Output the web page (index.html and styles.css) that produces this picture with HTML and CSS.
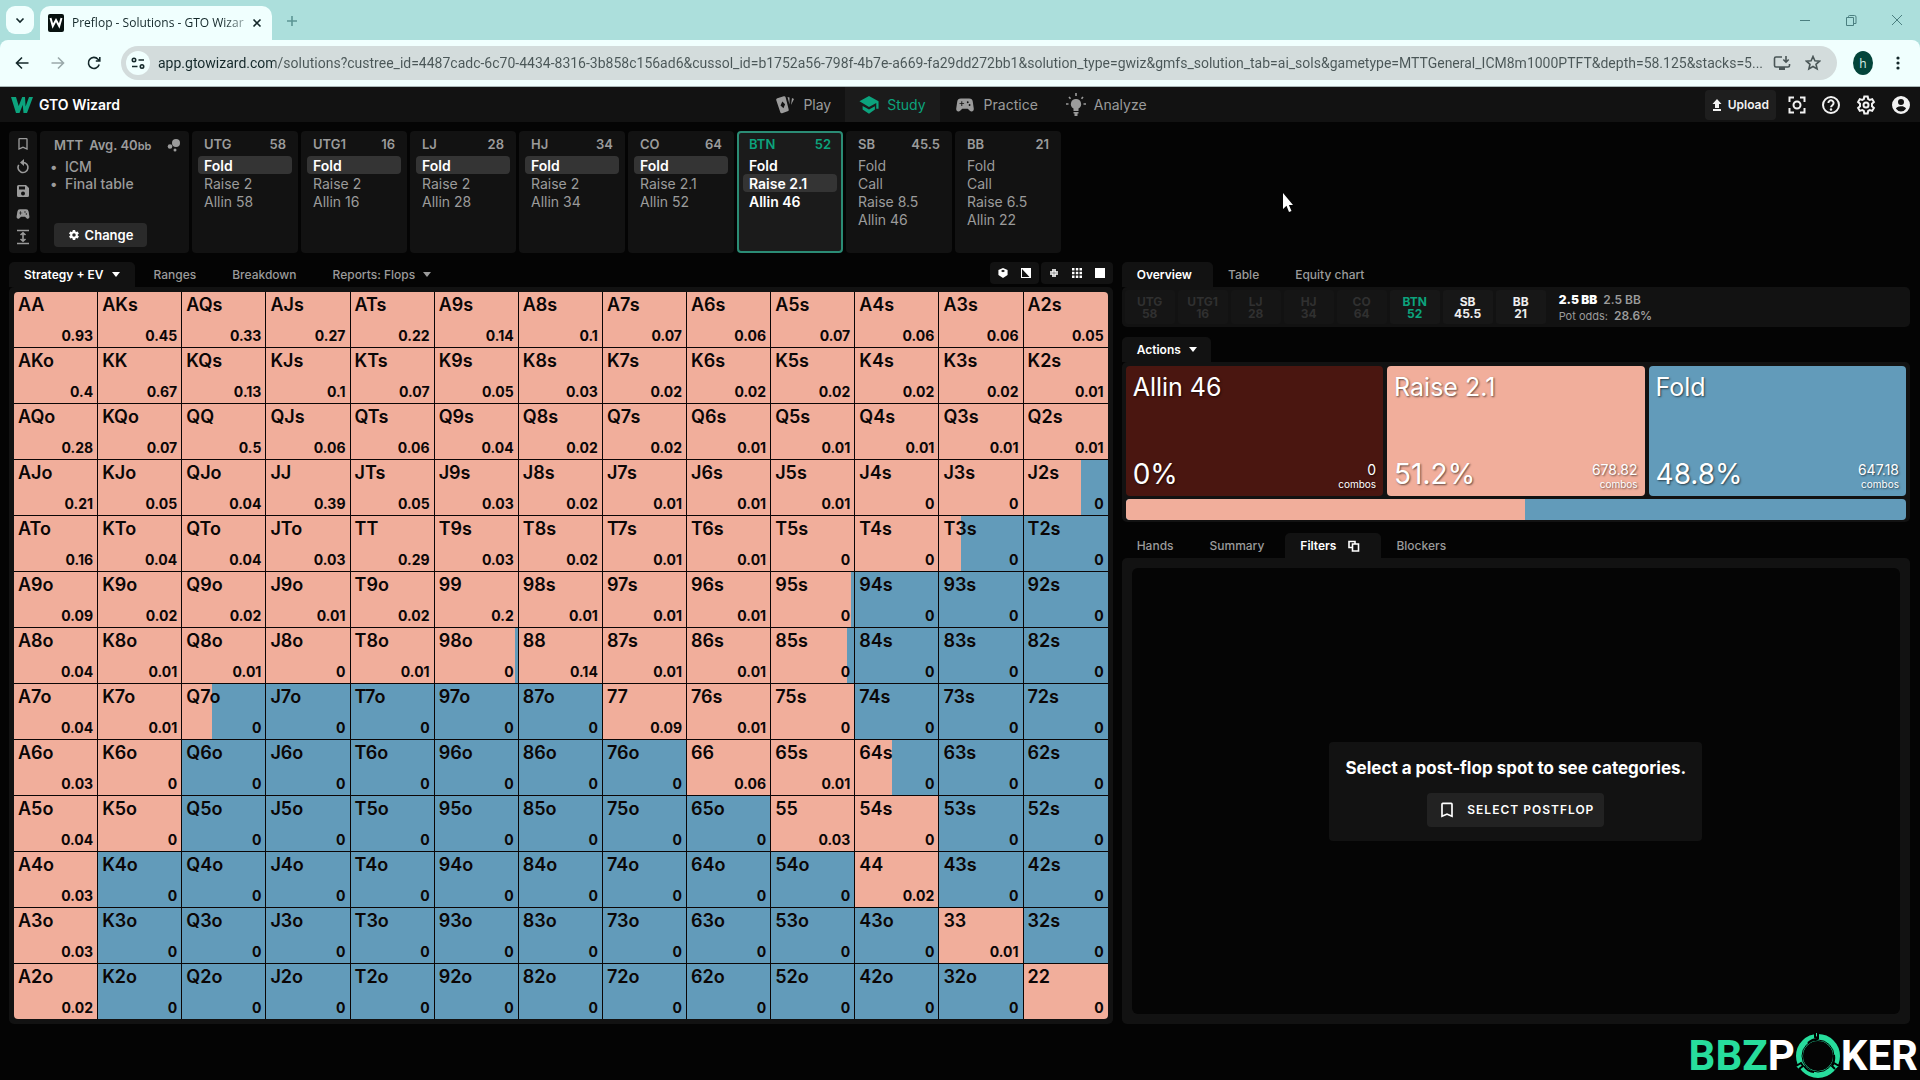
FILE: index.html
```html
<!DOCTYPE html>
<html lang="en">
<head>
    <meta charset="UTF-8">
    <meta name="viewport" content="width=device-width, initial-scale=1.0">
    <title>Preflop - Solutions - GTO Wizard</title>
    <link rel="stylesheet" href="styles.css">
</head>
<body>
    <!-- icons used more than once -->
    <svg class="sprite" width="0" height="0" aria-hidden="true">
        <symbol id="bookmark" viewBox="0 0 24 24"><path d="M17 3H7a2 2 0 0 0-2 2v16l7-3 7 3V5a2 2 0 0 0-2-2zm0 15l-5-2.2L7 18V5h10z"/></symbol>
        <symbol id="gamepad" viewBox="0 0 24 24"><path fill-rule="evenodd" d="M21.6 16.1l-1.1-7.6A4 4 0 0 0 16.500 5h-9a4 4 0 0 0-4 3.500L2.400 16.100A2.500 2.500 0 0 0 6.700 18.200L9 16h6l2.300 2.200a2.500 2.500 0 0 0 4.300-2.100zM11 11H9v2H8v-2H6v-1h2V8h1v2h2zm4-1a1 1 0 1 1 0-2 1 1 0 0 1 0 2zm2 3a1 1 0 1 1 0-2 1 1 0 0 1 0 2z"/></symbol>
        <symbol id="gear" viewBox="0 0 24 24"><path fill-rule="evenodd" d="M19.400 13a7.500 7.500 0 0 0 0-2l2.100-1.600a.5.5 0 0 0 .1-.6l-2-3.500a.5.5 0 0 0-.6-.2l-2.500 1a7.300 7.300 0 0 0-1.700-1l-.4-2.600a.5.5 0 0 0-.5-.4h-4a.5.5 0 0 0-.5.4L9 5.100a7.700 7.700 0 0 0-1.700 1l-2.500-1a.5.5 0 0 0-.6.2l-2 3.500a.5.5 0 0 0 .1.600L4.500 11a8 8 0 0 0 0 2l-2.100 1.600a.5.5 0 0 0-.1.600l2 3.500c.1.200.4.300.6.200l2.500-1c.5.400 1.100.700 1.700 1l.4 2.600c0 .2.200.4.500.4h4c.200 0 .500-.2.500-.4l.4-2.600a7.300 7.300 0 0 0 1.700-1l2.500 1c.200.100.500 0 .600-.2l2-3.500a.5.5 0 0 0-.1-.6zM12 15.500a3.500 3.500 0 1 1 0-7 3.500 3.500 0 0 1 0 7z"/></symbol>
    </svg>

    <header class="browser">
        <div class="tabstrip">
            <button class="tab-search" aria-label="Search tabs"><svg width="12" height="12" viewBox="0 0 12 12"><path class="line" d="M2.500 4.500L6 8l3.500-3.500"/></svg></button>
            <div class="page-tab">
                <svg width="16" height="18" viewBox="0 0 16 18"><rect width="16" height="18" rx="2" fill="#07110f"/><path d="M2.500 4l2.300 8L8 6l3.200 6L13.500 4" fill="none" stroke="#fff" stroke-width="2"/></svg>
                <span class="page-title">Preflop - Solutions - GTO Wizar</span>
                <button class="close-tab" aria-label="Close tab"><svg width="10" height="10" viewBox="0 0 10 10"><path class="line" d="M1.500 1.500l7 7m0-7l-7 7"/></svg></button>
            </div>
            <button class="new-tab" aria-label="New tab"><svg width="12" height="12" viewBox="0 0 12 12"><path class="line" d="M6 1v10M1 6h10"/></svg></button>
            <div class="window-buttons">
                <button aria-label="Minimize"><svg width="12" height="12" viewBox="0 0 12 12"><path class="thin" d="M1 6.500h10"/></svg></button>
                <button aria-label="Restore"><svg width="12" height="12" viewBox="0 0 12 12"><path class="thin" d="M1.500 3.500h7v8h-7zM3.500 3.500v-1a1 1 0 0 1 1-1h5a1.500 1.500 0 0 1 1.500 1.500v6.500h-2"/></svg></button>
                <button aria-label="Close"><svg width="12" height="12" viewBox="0 0 12 12"><path class="thin" d="M1 1l10 10M11 1L1 11"/></svg></button>
            </div>
        </div>
        <div class="toolbar">
            <button aria-label="Back"><svg width="14" height="14" viewBox="0 0 14 14"><path class="line" d="M13.500 7H1.500M7 1.500L1.500 7 7 12.500"/></svg></button>
            <button class="dim" aria-label="Forward"><svg width="14" height="14" viewBox="0 0 14 14"><path class="line" d="M.5 7h12M7 1.500L12.500 7 7 12.500"/></svg></button>
            <button aria-label="Reload"><svg width="14" height="14" viewBox="0 0 14 14"><path class="line" d="M12.200 8.500A5.500 5.500 0 1 1 11 3.200l1.500 1.500M12.800 1v4h-4"/></svg></button>
            <div class="address">
                <button class="site-info" aria-label="Site information"><svg width="14" height="14" viewBox="0 0 14 14"><path class="line" d="M7.500 4H13M1 10.500h5.500"/><circle class="line" cx="3" cy="4" r="1.700"/><circle class="line" cx="11" cy="10.500" r="1.700"/></svg></button>
                <input class="url" type="text" aria-label="Address" value="app.gtowizard.com/solutions?custree_id=4487cadc-6c70-4434-8316-3b858c156ad6&amp;cussol_id=b1752a56-798f-4b7e-a669-fa29dd272bb1&amp;solution_type=gwiz&amp;gmfs_solution_tab=ai_sols&amp;gametype=MTTGeneral_ICM8m1000PTFT&amp;depth=58.125&amp;stacks=5...">
                <button aria-label="Install app"><svg width="18" height="16" viewBox="0 0 18 16"><path class="line" d="M9 2H3a1.500 1.500 0 0 0-1.500 1.500v7A1.500 1.500 0 0 0 3 12h12a1.500 1.500 0 0 0 1.500-1.500V9M13 1v6M10.300 4.500L13 7.200l2.700-2.700"/><path d="M6 12h6v3H6z"/></svg></button>
                <button aria-label="Bookmark page"><svg width="16" height="16" viewBox="0 0 16 16"><path class="line" d="M8 1.500l1.900 4.300 4.600.4-3.500 3.100 1.100 4.600L8 11.500l-4.100 2.400L5 9.300 1.500 6.200l4.600-.4z"/></svg></button>
            </div>
            <button class="profile" aria-label="Profile">h</button>
            <button aria-label="Browser menu"><svg width="6" height="16" viewBox="0 0 6 16"><circle cx="3" cy="3" r="1.600"/><circle cx="3" cy="8" r="1.600"/><circle cx="3" cy="13" r="1.600"/></svg></button>
        </div>
    </header>

    <div class="app-header">
        <a class="brand" href="#">
            <svg width="22" height="18" viewBox="0 0 22 18"><path d="M0 1h5l2.700 9L11.200 1H14l.6 9.500L18 1h4l-6 16h-3.500l-.8-8-3.200 8H5z" fill="#0ca37d"/></svg>
            GTO Wizard
        </a>
        <nav class="main-nav">
            <a href="#"><svg width="20" height="20" viewBox="0 0 20 20"><path fill-rule="evenodd" d="M2.300 3.200l6.500-2a1.500 1.500 0 0 1 1.800 1.100l3.100 12.200a1.500 1.500 0 0 1-1.100 1.800l-5.500 2a1.500 1.500 0 0 1-1.800-1.100L1.200 5a1.500 1.500 0 0 1 1.100-1.800zM7.300 6.500L5.500 10.500l3 2.800 1.600-4z"/><path d="M12.500 2l2 .5v7zM17 3l2 1-3 6z"/></svg>Play</a>
            <a class="current" href="#"><svg width="20" height="20" viewBox="0 0 22 20"><path d="M11 0l10.500 6v8H19V7.800L11 12.200.5 6zM4 11l7 4 6.500-3.700V15L11 19.500 4 15z"/></svg>Study</a>
            <a href="#"><svg width="22" height="22"><use href="#gamepad"/></svg>Practice</a>
            <a href="#"><svg width="20" height="24" viewBox="0 0 20 24"><path d="M10 6a5 5 0 0 0-2.500 9.400V18h5v-2.600A5 5 0 0 0 10 6zM7.500 19h5v1.500h-1V23h-3v-2.500h-1z"/><path class="line" d="M10 0V3M0 11h2.500M17.500 11H20M3 4l1.500 1.800M17 4l-1.500 1.800"/></svg>Analyze</a>
        </nav>
        <div class="header-tools">
            <button class="upload"><svg width="10" height="12" viewBox="0 0 10 12"><path d="M5 0l4.500 5H7v4H3V5H.5zM1 10h8v2H1z"/></svg>Upload</button>
            <button aria-label="Screenshot"><svg width="18" height="18" viewBox="0 0 18 18"><path class="bold" d="M1.500 6V1.500H6M12 1.500h4.500V6M16.500 12v4.500H12M6 16.500H1.500V12"/><circle class="bold" cx="9" cy="9" r="3.500"/></svg></button>
            <button aria-label="Help"><svg width="20" height="20" viewBox="0 0 20 20"><circle class="bold" cx="10" cy="10" r="8"/><path class="bold" d="M7.400 8a2.600 2.600 0 1 1 4.200 2c-1 .8-1.600 1.200-1.600 2.200"/><circle cx="10" cy="14.500" r="1.200"/></svg></button>
            <button aria-label="Settings"><svg width="20" height="20" viewBox="0 0 20 20"><path class="bold" d="M8.300 1.500h3.400l.5 2.500 1.600.9 2.400-.8 1.700 2.900-1.900 1.700v2.600l1.900 1.700-1.700 2.900-2.400-.8-1.600.9-.5 2.500H8.300L7.800 16l-1.600-.9-2.400.8L2.100 13 4 11.300V8.700L2.100 7l1.700-2.900 2.400.8L7.800 4z"/><circle class="bold" cx="10" cy="10" r="2.500"/></svg></button>
            <button aria-label="Account"><svg width="20" height="20" viewBox="0 0 20 20"><path fill-rule="evenodd" d="M10 1a9 9 0 1 0 0 18 9 9 0 0 0 0-18zm0 3a3 3 0 1 1 0 6 3 3 0 0 1 0-6zm0 12.500a6 6 0 0 1-5-2.700c0-1.700 3.300-2.600 5-2.600s5 .9 5 2.600a6 6 0 0 1-5 2.700z"/></svg></button>
        </div>
    </div>

    <main>
        <section class="spots" aria-label="Action history">
            <div class="rail">
                <button aria-label="Bookmark"><svg width="16" height="16"><use href="#bookmark"/></svg></button>
                <button aria-label="Reset"><svg width="16" height="16" viewBox="0 0 16 16"><path class="line" d="M8 3.500a5 5 0 1 1-4.300 2.400"/><path d="M9 0v7L5 3.500z"/></svg></button>
                <button aria-label="Save"><svg width="16" height="16" viewBox="0 0 16 16"><path fill-rule="evenodd" d="M3.500 2H11l3 3v7.500a1.500 1.500 0 0 1-1.500 1.500h-9A1.500 1.500 0 0 1 2 12.500v-9A1.500 1.500 0 0 1 3.500 2zM4 3.500v3h6v-3zM8 8.500a2 2 0 1 0 0 4 2 2 0 0 0 0-4z"/></svg></button>
                <button aria-label="Practice this spot"><svg width="16" height="16"><use href="#gamepad"/></svg></button>
                <button aria-label="Collapse"><svg width="16" height="16" viewBox="0 0 16 16"><path class="line" d="M2 1.500h12M2 14.500h12M8 4.500v7M5.500 6L8 3.800 10.500 6M5.500 10L8 12.200l2.500-2.200"/></svg></button>
            </div>
            <div class="format">
                <div class="format-head"><span>MTT</span><span>Avg. 40<small>bb</small></span><svg width="14" height="14" viewBox="0 0 14 14"><circle cx="9" cy="5" r="4"/><circle cx="3" cy="8.500" r="2.300"/><circle cx="8" cy="12" r="1.500"/></svg></div>
                <ul>
                    <li>ICM</li>
                    <li>Final table</li>
                </ul>
                <button class="change"><svg width="12" height="12"><use href="#gear"/></svg>Change</button>
            </div>
            <div class="spot"><h2>UTG<span>58</span></h2><button class="taken">Fold</button><button>Raise 2</button><button>Allin 58</button></div>
            <div class="spot"><h2>UTG1<span>16</span></h2><button class="taken">Fold</button><button>Raise 2</button><button>Allin 16</button></div>
            <div class="spot"><h2>LJ<span>28</span></h2><button class="taken">Fold</button><button>Raise 2</button><button>Allin 28</button></div>
            <div class="spot"><h2>HJ<span>34</span></h2><button class="taken">Fold</button><button>Raise 2</button><button>Allin 34</button></div>
            <div class="spot"><h2>CO<span>64</span></h2><button class="taken">Fold</button><button>Raise 2.1</button><button>Allin 52</button></div>
            <div class="spot active"><h2>BTN<span>52</span></h2><button>Fold</button><button class="taken">Raise 2.1</button><button>Allin 46</button></div>
            <div class="spot"><h2>SB<span>45.5</span></h2><button>Fold</button><button>Call</button><button>Raise 8.5</button><button>Allin 46</button></div>
            <div class="spot"><h2>BB<span>21</span></h2><button>Fold</button><button>Call</button><button>Raise 6.5</button><button>Allin 22</button></div>
        </section>

        <div class="columns">
            <section class="strategy">
                <div class="tabs">
                    <button class="selected">Strategy + EV<i class="caret"></i></button>
                    <button>Ranges</button>
                    <button>Breakdown</button>
                    <button>Reports: Flops<i class="caret"></i></button>
                    <div class="view-tools">
                        <div class="tool-group">
                            <button aria-label="Suits"><svg width="10" height="10" viewBox="0 0 12 12"><path fill-rule="evenodd" d="M6 0l5.500 2.500v6L6 12 .5 8.500v-6zM6 2L3.500 3.500 6 5l2.500-1.500z"/></svg></button>
                            <button aria-label="Contrast"><svg width="10" height="10" viewBox="0 0 10 10"><path fill-rule="evenodd" d="M0 0h10v10H0zM1 1v8h7.500z"/></svg></button>
                        </div>
                        <div class="tool-group">
                            <button aria-label="Compact"><svg width="10" height="10" viewBox="0 0 10 10"><path class="line" d="M4 1v3H1M6 1v3h3M4 9V6H1M6 9V6h3"/></svg></button>
                            <button aria-label="Grid"><svg width="10" height="10" viewBox="0 0 10 10"><path d="M0 0h2.500v2.500H0zM3.800 0h2.500v2.500H3.800zM7.500 0H10v2.500H7.500zM0 3.800h2.500v2.500H0zM3.800 3.800h2.500v2.500H3.800zM7.500 3.800H10v2.500H7.500zM0 7.500h2.500V10H0zM3.800 7.500h2.500V10H3.800zM7.500 7.500H10V10H7.500z"/></svg></button>
                            <button aria-label="Full"><svg width="10" height="10" viewBox="0 0 10 10"><path d="M0 0h10v10H0z"/></svg></button>
                        </div>
                    </div>
                </div>
                <div class="panel matrix-panel">
                    <table class="matrix" aria-label="Strategy and EV by hand"><tbody id="matrix"></tbody></table>
                </div>
            </section>

            <section class="details">
                <div class="tabs">
                    <button class="selected">Overview</button>
                    <button>Table</button>
                    <button>Equity chart</button>
                </div>
                <div class="panel stacks">
                    <div class="seat folded">UTG<br>58</div>
                    <div class="seat folded">UTG1<br>16</div>
                    <div class="seat folded">LJ<br>28</div>
                    <div class="seat folded">HJ<br>34</div>
                    <div class="seat folded">CO<br>64</div>
                    <div class="seat hero">BTN<br>52</div>
                    <div class="seat">SB<br>45.5</div>
                    <div class="seat">BB<br>21</div>
                    <div class="pot">
                        <div><b>2.5 BB</b>&nbsp; 2.5 BB</div>
                        <div><small>Pot odds:</small>&nbsp; 28.6%</div>
                    </div>
                </div>

                <div class="tabs actions-tabs">
                    <button class="selected">Actions<i class="caret"></i></button>
                </div>
                <div class="panel actions">
                    <div class="action-cards">
                        <button class="action allin"><span class="name">Allin 46</span><span class="share">0%</span><span class="combos">0<small>combos</small></span></button>
                        <button class="action raise"><span class="name">Raise 2.1</span><span class="share">51.2%</span><span class="combos">678.82<small>combos</small></span></button>
                        <button class="action fold"><span class="name">Fold</span><span class="share">48.8%</span><span class="combos">647.18<small>combos</small></span></button>
                    </div>
                    <div class="total"><div class="total-raise" style="width: 51.2%"></div></div>
                </div>

                <div class="tabs filter-tabs">
                    <button>Hands</button>
                    <button>Summary</button>
                    <button class="selected with-icon">Filters<svg width="12" height="12" viewBox="0 0 12 12"><path class="line" d="M4 7.500H1v-6h6V4M4.500 4h6v7h-6z"/></svg></button>
                    <button>Blockers</button>
                </div>
                <div class="panel filters">
                    <div class="filters-body">
                        <div class="notice">
                            <p>Select a post-flop spot to see categories.</p>
                            <button><svg width="20" height="20"><use href="#bookmark"/></svg>SELECT POSTFLOP</button>
                        </div>
                    </div>
                </div>
            </section>
        </div>
    </main>

    <footer>
        <div class="watermark">
            <span class="bbz">BBZ</span><span>P</span>
            <svg width="46" height="46" viewBox="0 0 46 46">
                <circle cx="23" cy="23" r="18.500" fill="none" stroke="#27dd9c" stroke-width="7"/>
                <circle cx="23" cy="23" r="16" fill="none" stroke="#000" stroke-width="1"/>
                <path d="M20 0v4l3 1v-5M40 36l-3-3 2-3 5 3M1 33l5-3 2 3-4 3" fill="#27dd9c" stroke="#000" stroke-width="2"/>
                <path d="M23 6q-6 0-10 4M37 32q3-4 2-10M9 33q4 6 10 6" fill="none" stroke="#000" stroke-width="2"/>
            </svg>
            <span>KER</span>
        </div>
    </footer>

    <svg class="cursor" width="12" height="20" viewBox="0 0 12 20"><path d="M1 0v16l3.500-3.300L7 19l2.500-1-2.600-6H11z" fill="#fff"/></svg>

    <script src="script.js"></script>
</body>
</html>
```
FILE: styles.css
```css
* {
    box-sizing: border-box;
}
body {
    margin: 0;
    min-height: 100vh;
    background-color: #040404;
    color: #9b9b9b;
    font-family: Inter, "Liberation Sans", sans-serif;
    font-size: 14px;
    overflow-x: hidden;
}
button {
    display: flex;
    align-items: center;
    padding: 0;
    border: 0;
    background: none;
    color: inherit;
    font: inherit;
    cursor: pointer;
}
a {
    color: inherit;
    text-decoration: none;
}
svg {
    display: block;
    flex: none;
    fill: currentColor;
}
.sprite {
    position: absolute;
}
.line, .thin, .bold {
    fill: none;
    stroke: currentColor;
    stroke-width: 1.6;
}
.thin {
    stroke-width: 1;
}
.bold {
    stroke-width: 2;
}

/* browser window */
.browser {
    font-family: "Open Sans", "Noto Sans", sans-serif;
    background-color: #acdfdc;
    color: #14282a;
}
.tabstrip {
    display: flex;
    height: 40px;
    padding: 6px 17px 0 6px;
}
.tab-search {
    justify-content: center;
    width: 28px;
    height: 28px;
    margin-right: 6px;
    border-radius: 9px;
    background-color: #f0fffe;
}
.page-tab {
    display: flex;
    align-items: center;
    width: 232px;
    height: 34px;
    padding: 0 11px 0 8px;
    gap: 8px;
    border-radius: 10px 10px 0 0;
    background-color: #f0fffe;
}
.page-title {
    flex: 1;
    font-size: 12px;
    line-height: 18px;
    white-space: nowrap;
    mask-image: linear-gradient(to right, #000 88%, rgba(0, 0, 0, 0.4));
}
.new-tab {
    height: 30px;
    margin-left: 14px;
    color: #5c9594;
}
.window-buttons {
    display: flex;
    gap: 34px;
    height: 28px;
    margin-left: auto;
    color: #4b7f80;
}
.toolbar {
    display: flex;
    align-items: center;
    gap: 22px;
    height: 47px;
    padding: 0 19px 0 15px;
    border-radius: 8px 8px 0 0;
    border-bottom: 1px solid #a9b8b8;
    background-color: #f0fffe;
}
.dim {
    color: #9aa9aa;
}
.address {
    display: flex;
    flex: 1;
    align-items: center;
    gap: 14px;
    height: 34px;
    margin: 0 -6px 0 -2px;
    padding: 0 16px 0 5px;
    border-radius: 17px;
    background-color: #d3dcdc;
    color: #4a5657;
}
.site-info {
    justify-content: center;
    width: 24px;
    height: 24px;
    margin-right: -6px;
    border-radius: 12px;
    background-color: #f0fffe;
    color: #14282a;
}
/* the host name is darker than the rest of the address */
.url {
    flex: 1;
    min-width: 0;
    height: 24px;
    margin-right: -12px;
    padding: 0;
    border: 0;
    background: linear-gradient(to right, #14282a 117px, #4a5657 117px);
    background-clip: text;
    color: transparent;
    font-family: Roboto, "Open Sans", sans-serif;
    font-size: 14px;
    text-overflow: ellipsis;
}
.profile {
    justify-content: center;
    width: 20px;
    height: 24px;
    border-radius: 50%;
    background-color: #03443a;
    color: #d8efe9;
    font-size: 12px;
}

/* app header */
.app-header {
    display: grid;
    grid-template-columns: 1fr auto 1fr;
    align-items: center;
    height: 35px;
    padding: 0 9px 0 11px;
    background-color: #121212;
}
.brand {
    display: flex;
    align-items: center;
    gap: 6px;
    color: #fff;
    font-weight: 600;
}
.main-nav {
    display: flex;
    height: 35px;
}
.main-nav a {
    display: flex;
    align-items: center;
    gap: 8px;
    padding: 0 14px;
}
.main-nav .current {
    background-color: #1b1b1b;
    color: #0ca37d;
}
.header-tools {
    display: flex;
    align-items: center;
    justify-content: flex-end;
    gap: 15px;
    color: #f2f2f2;
}
.upload {
    gap: 6px;
    height: 30px;
    padding: 0 7px;
    margin-right: -3px;
    border-radius: 4px;
    background-color: #1e1e1e;
    font-size: 12px;
    font-weight: 600;
}

/* action history */
main {
    padding: 9px 10px 0 9px;
}
.spots {
    display: flex;
    gap: 3px;
}
.rail, .format, .spot {
    min-height: 122px;
    border-radius: 4px;
    background-color: #121212;
}
.rail {
    display: flex;
    flex-direction: column;
    align-items: center;
    justify-content: space-between;
    width: 28px;
    padding: 5px 0 8px;
}
.format {
    width: 149px;
    padding: 5px 8px 6px 14px;
    font-weight: 500;
}
.format-head {
    display: flex;
    align-items: center;
    gap: 6px;
    height: 17px;
    font-size: 13px;
    font-weight: 600;
}
.format-head svg {
    margin-left: auto;
}
.format-head small {
    font-size: 11px;
}
.format ul {
    margin: 5px 0 31px;
    padding-left: 11px;
    line-height: 17px;
}
.format li::marker {
    content: "•  ";
}
.change {
    justify-content: center;
    gap: 5px;
    width: 93px;
    height: 24px;
    border-radius: 4px;
    background-color: #2a2a2a;
    color: #fff;
    font-size: 13px;
    font-weight: 600;
}
.spot {
    width: 106px;
    padding: 5px 6px 0;
}
.spot h2 {
    display: flex;
    justify-content: space-between;
    height: 20px;
    margin: 0;
    padding: 0 6px;
    font-size: 13px;
    font-weight: 600;
    line-height: 17px;
}
.spot button {
    width: 94px;
    height: 18px;
    padding: 0 6px;
    border-radius: 4px;
}
.spot .taken {
    background-color: #343434;
    color: #fff;
    font-weight: 600;
}
.spot.active {
    padding: 3px 4px 0;
    border: 2px solid #2b8c75;
    background-color: #1b1b1b;
}
.spot.active h2 {
    color: #0ca37d;
}
.spot.active button {
    color: #fff;
    font-weight: 600;
}

/* tabs and panels */
.columns {
    display: grid;
    grid-template-columns: 7fr 5fr;
    gap: 9px;
    margin-top: 9px;
}
.strategy, .details {
    display: flex;
    flex-direction: column;
    min-width: 0;
}
.tabs {
    display: flex;
    height: 25px;
    font-size: 12px;
    font-weight: 500;
}
.tabs > button {
    gap: 8px;
    padding: 0 21px 0 15px;
    border-radius: 5px 5px 0 0;
}
.tabs > .selected {
    background-color: #121212;
    color: #fff;
    font-weight: 600;
}
.actions-tabs > .selected {
    padding-right: 14px;
}
.tabs > .with-icon {
    gap: 12px;
}
.caret {
    border: 4px solid transparent;
    border-top: 5px solid currentColor;
    border-bottom: 0;
}
.panel {
    border-radius: 5px;
    background-color: #121212;
}
.strategy .tabs > button {
    padding: 0 18px;
}
.strategy .tabs > .selected {
    gap: 9px;
    padding: 0 15px;
}
.view-tools {
    display: flex;
    gap: 2px;
    margin-left: auto;
    color: #fff;
}
.tool-group {
    display: flex;
    align-items: center;
    gap: 13px;
    height: 22px;
    padding: 0 8px;
    border-radius: 4px;
    background-color: #121212;
}

/* hand matrix */
.matrix-panel {
    padding: 5px;
}
.matrix {
    width: 100%;
    table-layout: fixed;
    border-spacing: 0;
    border-radius: 4px;
    overflow: hidden;
    color: #0b0606;
    font-weight: 600;
}
.matrix td {
    height: 56px;
    padding: 2px 4px 0;
    border-right: 1px solid #0b0606;
    border-bottom: 1px solid #0b0606;
    vertical-align: top;
}
.matrix td:last-child {
    border-right: 0;
}
.matrix tr:last-child td {
    height: 55px;
    border-bottom: 0;
}
.hand, .ev {
    display: block;
}
.hand {
    height: 32px;
    font-size: 18px;
    line-height: 22px;
}
.ev {
    font-size: 14px;
    font-weight: 700;
    line-height: 20px;
    text-align: right;
}

/* overview */
.stacks {
    display: flex;
    gap: 3px;
    height: 40px;
    padding: 3px;
}
.seat {
    width: 50px;
    padding: 6px 0 0;
    border-radius: 3px;
    background-color: #171717;
    color: #eee;
    font-size: 12px;
    font-weight: 700;
    line-height: 12px;
    text-align: center;
}
.seat.folded {
    background-color: #151515;
    color: #303030;
}
.seat.hero {
    color: #0ca37d;
}
.pot {
    padding: 2px 0 0 10px;
    font-size: 12px;
    font-weight: 600;
    line-height: 16px;
}
.pot b {
    color: #fff;
}
.pot small {
    font-size: 11px;
    font-weight: 400;
}
.actions-tabs {
    margin-top: 10px;
}
.filter-tabs {
    margin-top: 11px;
}
.actions {
    padding: 4px 4px 2px;
}
.action-cards {
    display: grid;
    grid-template-columns: 1fr 1fr 1fr;
    gap: 4px;
}
.action {
    display: grid;
    grid-template-columns: 1fr auto;
    grid-template-rows: 1fr auto;
    align-items: end;
    height: 130px;
    padding: 6px 7px 5px;
    border-radius: 4px;
    color: #fff;
    text-align: left;
    text-shadow: 1px 1px 2px rgba(0, 0, 0, 0.6);
}
.name {
    grid-column: 1 / 3;
    align-self: start;
    font-size: 25px;
    line-height: 30px;
}
.share {
    font-size: 28px;
    line-height: 34px;
}
.combos {
    font-size: 14px;
    line-height: 14px;
    text-align: right;
}
.combos small {
    display: block;
    font-size: 10px;
}
.allin {
    background-color: #4a1610;
}
.raise {
    background-color: #f1ae9b;
}
.fold {
    background-color: #629bba;
}
.total {
    height: 21px;
    margin-top: 3px;
    border-radius: 4px;
    background-color: #629bba;
    overflow: hidden;
}
.total-raise {
    height: 100%;
    background-color: #f1ae9b;
}
.filters {
    display: flex;
    flex: 1;
    padding: 10px;
}
.filters-body {
    display: flex;
    flex: 1;
    align-items: center;
    justify-content: center;
    border-radius: 6px;
    background-color: #050505;
}
.notice {
    display: flex;
    flex-direction: column;
    align-items: center;
    padding: 14px 16px;
    border-radius: 4px;
    background-color: #121212;
    color: #fff;
}
.notice p {
    margin: 0 0 12px;
    font-size: 17px;
    font-weight: 700;
    line-height: 25px;
}
.notice button {
    gap: 10px;
    height: 34px;
    padding: 0 10px;
    border-radius: 4px;
    background-color: #222;
    font-size: 12px;
    font-weight: 600;
    letter-spacing: 1px;
}

footer {
    display: flex;
    justify-content: flex-end;
    padding: 9px 2px 0;
}
.watermark {
    display: flex;
    align-items: center;
    color: #fff;
    font-family: Roboto, sans-serif;
    font-size: 42px;
    font-weight: 700;
    line-height: 46px;
}
.bbz {
    color: #27dd9c;
}
.cursor {
    position: absolute;
    top: 193px;
    left: 1282px;
}
```
FILE: script.js
```js
const ranks = "AKQJT98765432";

// EV in bb, one line for each row of the matrix
const evs = [
    "0.93 0.45 0.33 0.27 0.22 0.14 0.1 0.07 0.06 0.07 0.06 0.06 0.05",
    "0.4 0.67 0.13 0.1 0.07 0.05 0.03 0.02 0.02 0.02 0.02 0.02 0.01",
    "0.28 0.07 0.5 0.06 0.06 0.04 0.02 0.02 0.01 0.01 0.01 0.01 0.01",
    "0.21 0.05 0.04 0.39 0.05 0.03 0.02 0.01 0.01 0.01 0 0 0",
    "0.16 0.04 0.04 0.03 0.29 0.03 0.02 0.01 0.01 0 0 0 0",
    "0.09 0.02 0.02 0.01 0.02 0.2 0.01 0.01 0.01 0 0 0 0",
    "0.04 0.01 0.01 0 0.01 0 0.14 0.01 0.01 0 0 0 0",
    "0.04 0.01 0 0 0 0 0 0.09 0.01 0 0 0 0",
    "0.03 0 0 0 0 0 0 0 0.06 0.01 0 0 0",
    "0.04 0 0 0 0 0 0 0 0 0.03 0 0 0",
    "0.03 0 0 0 0 0 0 0 0 0 0.02 0 0",
    "0.03 0 0 0 0 0 0 0 0 0 0 0.01 0",
    "0.02 0 0 0 0 0 0 0 0 0 0 0 0"
];

// r = raise, f = fold, m = mixed
const plays = [
    "rrrrrrrrrrrrr",
    "rrrrrrrrrrrrr",
    "rrrrrrrrrrrrr",
    "rrrrrrrrrrrrm",
    "rrrrrrrrrrrmf",
    "rrrrrrrrrmfff",
    "rrrrrmrrrmfff",
    "rrmffffrrrfff",
    "rrffffffrrmff",
    "rrfffffffrrff",
    "rfffffffffrff",
    "rffffffffffrf",
    "rfffffffffffr"
];
const mixed = { J2s: 68, T3s: 26, "95s": 96, "98o": 96, "85s": 91, Q7o: 36, "64s": 44 };

const matrix = document.getElementById("matrix");
for (let r = 0; r < 13; r++) {
    const row = matrix.insertRow();
    const values = evs[r].split(" ");
    for (let c = 0; c < 13; c++) {
        let hand = ranks[r] + ranks[c];
        if (c > r) hand += "s";
        if (c < r) hand = ranks[c] + ranks[r] + "o";

        const cell = row.insertCell();
        cell.innerHTML = `<span class="hand">${hand}</span><span class="ev">${values[c]}</span>`;
        if (plays[r][c] === "m") {
            cell.style.background = `linear-gradient(to right, #f1ae9b ${mixed[hand]}%, #629bba ${mixed[hand]}%)`;
        } else {
            cell.className = plays[r][c] === "r" ? "raise" : "fold";
        }
    }
}
```
